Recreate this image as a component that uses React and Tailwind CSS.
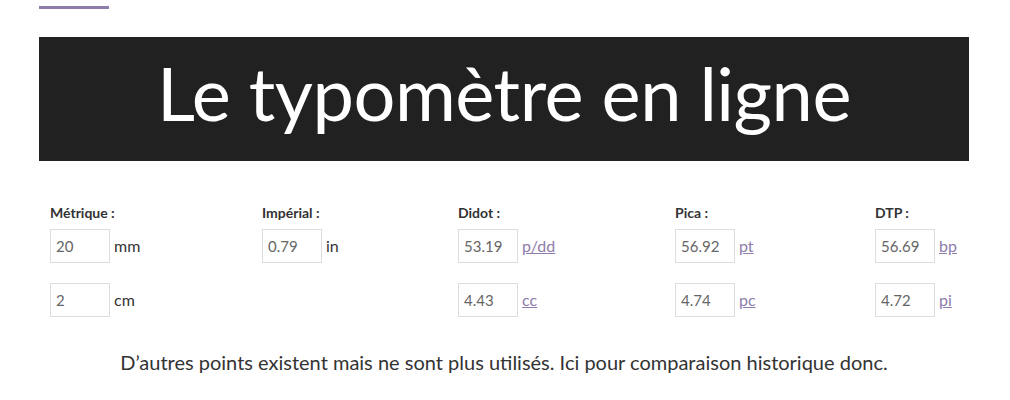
import React from 'react';

const columns = [
  {
    label: 'Métrique :',
    rows: [
      { value: '20', unit: 'mm' },
      { value: '2', unit: 'cm' },
    ],
  },
  {
    label: 'Impérial :',
    rows: [{ value: '0.79', unit: 'in' }],
  },
  {
    label: 'Didot :',
    rows: [
      { value: '53.19', unit: 'p/dd', link: true },
      { value: '4.43', unit: 'cc', link: true },
    ],
  },
  {
    label: 'Pica :',
    rows: [
      { value: '56.92', unit: 'pt', link: true },
      { value: '4.74', unit: 'pc', link: true },
    ],
  },
  {
    label: 'DTP :',
    rows: [
      { value: '56.69', unit: 'bp', link: true },
      { value: '4.72', unit: 'pi', link: true },
    ],
  },
];

function Field({ value, unit, link }) {
  return (
    <div className="flex items-center h-[34px]">
      <input
        type="text"
        defaultValue={value}
        className="w-[60px] h-[34px] border border-[#dddddd] px-[5px] text-[15px] text-[#666666] outline-none bg-white"
      />
      {link ? (
        <a href="#" className="ml-[4px] text-[16px] text-[#8e7cab] underline">
          {unit}
        </a>
      ) : (
        <span className="ml-[4px] text-[16px] text-[#333333]">{unit}</span>
      )}
    </div>
  );
}

export default function App() {
  return (
    <div className="min-h-screen bg-white font-['Lato','Noto_Sans',sans-serif] text-[#333333]">
      <div className="mx-[39px] w-[930px]">
        {/* accent bar */}
        <div className="pt-[6px]">
          <div className="w-[70px] h-[3px] bg-[#8e7cab]" />
        </div>

        {/* Banner */}
        <div className="mt-[28px] h-[124px] bg-[#212121] flex items-center justify-center">
          <h1 className="text-[74px] leading-none text-white font-normal tracking-[-0.5px] pb-[12px]">
            Le typomètre en ligne
          </h1>
        </div>

        {/* Converter */}
        <div className="mt-[44px] pl-[11px] grid grid-cols-[212px_196px_217px_200px_auto]">
          {columns.map((col) => (
            <div key={col.label} className="flex flex-col">
              <div className="text-[14px] font-bold text-[#333333] leading-[16px] h-[24px]">
                {col.label}
              </div>
              <div className="flex flex-col gap-[20px]">
                {col.rows.map((row) => (
                  <Field key={row.unit} {...row} />
                ))}
              </div>
            </div>
          ))}
        </div>

        <p className="mt-[30px] text-center text-[20px] text-[#333333]">
          D’autres points existent mais ne sont plus utilisés. Ici pour comparaison historique donc.
        </p>
      </div>
    </div>
  );
}
